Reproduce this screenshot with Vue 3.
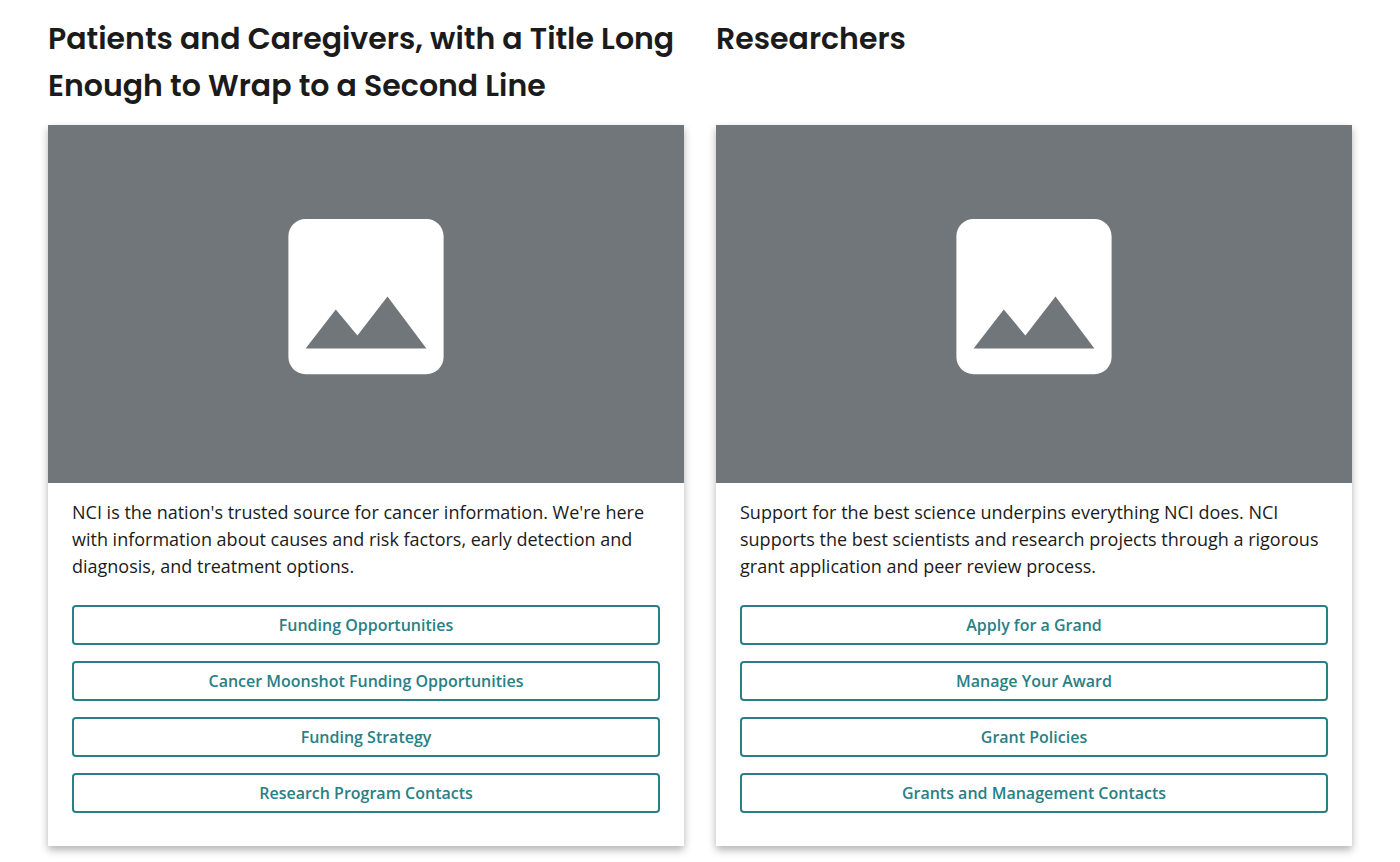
<script setup>
const cards = [
  {
    title: 'Patients and Caregivers, with a Title Long Enough to Wrap to a Second Line',
    text: "NCI is the nation's trusted source for cancer information. We're here with information about causes and risk factors, early detection and diagnosis, and treatment options.",
    links: ['Funding Opportunities', 'Cancer Moonshot Funding Opportunities', 'Funding Strategy', 'Research Program Contacts'],
  },
  {
    title: 'Researchers',
    text: 'Support for the best science underpins everything NCI does. NCI supports the best scientists and research projects through a rigorous grant application and peer review process.',
    links: ['Apply for a Grand', 'Manage Your Award', 'Grant Policies', 'Grants and Management Contacts'],
  },
]
</script>

<template>
  <main class="cards">
    <section v-for="card in cards" :key="card.title" class="group">
      <h2 class="title">{{ card.title }}</h2>
      <div class="card">
        <svg class="media" viewBox="0 0 636 358" role="img" aria-label="Placeholder image">
          <rect width="636" height="358" fill="#71767a" />
          <path fill="#fff" fill-rule="evenodd" d="M395.6 232V111.200C395.600 101.700 387.900 94 378.400 94H257.600C248.100 94 240.400 101.700 240.400 111.200V232C240.400 241.500 248.100 249.200 257.600 249.200H378.400C387.900 249.200 395.600 241.500 395.600 232ZM287.800 184.500L309.400 210.400L339.500 171.600L378.400 223.400H257.600Z" />
        </svg>
        <div class="body">
          <p class="text">{{ card.text }}</p>
          <ul class="links">
            <li v-for="link in card.links" :key="link">
              <a class="button" href="#">{{ link }}</a>
            </li>
          </ul>
        </div>
      </div>
    </section>
  </main>
</template>

<style>
body {
  background: #fff;
}
</style>

<style scoped>
.cards {
  display: grid;
  grid-template-columns: 1fr 1fr;
  grid-template-rows: auto auto;
  column-gap: 32px;
  row-gap: 16px;
  padding: 15px 48px 16px;
  color: #1b1b1b;
  font-family: "Open Sans", sans-serif;
}
.group {
  display: grid;
  grid-row: span 2;
  grid-template-rows: subgrid;
  min-width: 0;
}
.title {
  margin: 0;
  font-family: Poppins, "Open Sans", sans-serif;
  font-size: 30px;
  font-weight: 600;
  line-height: 47px;
}
.card {
  background: #fff;
  box-shadow: 0 4px 8px rgba(0, 0, 0, 0.3);
}
.media {
  display: block;
  width: 100%;
}
.body {
  padding: 16px 24px 33px;
}
.text {
  margin: 0;
  font-size: 18px;
  line-height: 27px;
}
.links {
  display: grid;
  gap: 16px;
  margin: 25px 0 0;
  padding: 0;
  list-style: none;
}
.button {
  display: block;
  padding: 10px 20px;
  border: 2px solid #298085;
  border-radius: 4px;
  color: #298085;
  font-size: 16px;
  font-weight: 600;
  line-height: 16px;
  text-align: center;
  text-decoration: none;
}
</style>
